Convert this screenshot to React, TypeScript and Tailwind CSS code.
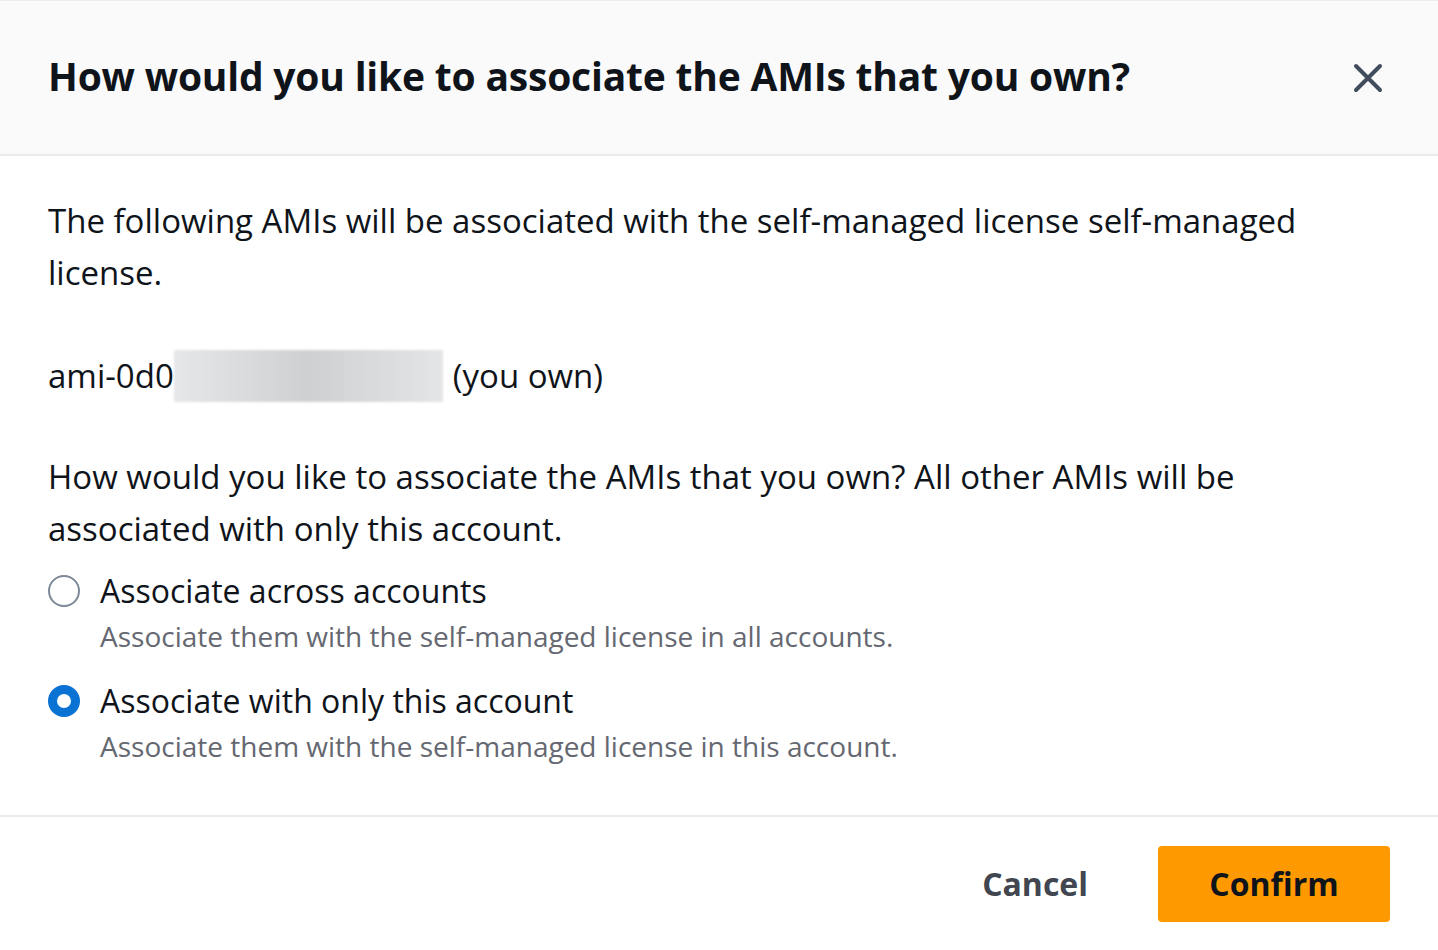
import React, { useState } from 'react';

const font = { fontFamily: '"Open Sans", "Noto Sans", Arial, sans-serif' };

interface RadioOptionProps {
  checked: boolean;
  label: string;
  description: string;
  onSelect: () => void;
}

const RadioOption: React.FC<RadioOptionProps> = ({ checked, label, description, onSelect }) => (
  <label className="flex cursor-pointer items-start gap-[20px]" onClick={onSelect}>
    <span className="flex h-[44px] items-center">
      <span
        className={`box-border block h-[32px] w-[32px] rounded-full ${
          checked ? 'border-[9px] border-[#0972d3] bg-white' : 'border-[2px] border-[#7d8998] bg-white'
        }`}
      />
    </span>
    <span className="flex flex-col">
      <span className="text-[32px] leading-[44px] text-[#0f141a]">{label}</span>
      <span className="text-[28px] leading-[46px] text-[#656871]">{description}</span>
    </span>
  </label>
);

export default function App() {
  const [scope, setScope] = useState<'all' | 'this'>('this');

  return (
    <div className="h-[950px] w-[1438px] overflow-hidden bg-white" style={font}>
      {/* Header */}
      <div className="flex h-[156px] items-center justify-between border-t border-b-2 border-[#e9ebed] bg-[#fafafa] pl-[48px] pr-[50px]">
        <h1 className="-mt-[4px] text-[39px] font-bold leading-[48px] tracking-[-0.2px] text-[#0f141a]">
          How would you like to associate the AMIs that you own?
        </h1>
        <button type="button" className="flex h-[40px] w-[40px] items-center justify-center text-[#414d5c]">
          <svg width="32" height="32" viewBox="0 0 16 16" fill="none" stroke="currentColor" strokeWidth="2" strokeLinecap="round">
            <path d="m2 2 12 12M14 2 2 14" />
          </svg>
        </button>
      </div>

      {/* Body */}
      <div className="px-[48px] pt-[39px] pb-[46px] text-[33px] leading-[52px] text-[#0f141a]">
        <p className="max-w-[1290px]">
          The following AMIs will be associated with the self-managed license self-managed license.
        </p>
        <div className="mt-[51px] flex items-center">
          <span>ami-0d0</span>
          <span className="h-[52px] w-[269px] bg-gradient-to-r from-[#e6e7e8] via-[#cfd0d1] to-[#e4e5e6] blur-[1px]" />
          <span className="ml-[10px]">(you own)</span>
        </div>
        <p className="mt-[49px] max-w-[1290px]">
          How would you like to associate the AMIs that you own? All other AMIs will be associated with only this account.
        </p>
        <div className="mt-[14px] flex flex-col gap-[20px]">
          <RadioOption
            checked={scope === 'all'}
            label="Associate across accounts"
            description="Associate them with the self-managed license in all accounts."
            onSelect={() => setScope('all')}
          />
          <RadioOption
            checked={scope === 'this'}
            label="Associate with only this account"
            description="Associate them with the self-managed license in this account."
            onSelect={() => setScope('this')}
          />
        </div>
      </div>

      {/* Footer */}
      <div className="flex justify-end border-t-2 border-[#e9ebed] pt-[29px] pr-[48px]">
        <div className="flex items-center gap-[40px]">
          <button type="button" className="px-[30px] text-[32px] font-bold text-[#424650]">
            Cancel
          </button>
          <button
            type="button"
            className="h-[76px] w-[232px] rounded-[4px] bg-[#ff9900] text-[32px] font-bold text-[#0f141a]"
          >
            Confirm
          </button>
        </div>
      </div>
    </div>
  );
}
